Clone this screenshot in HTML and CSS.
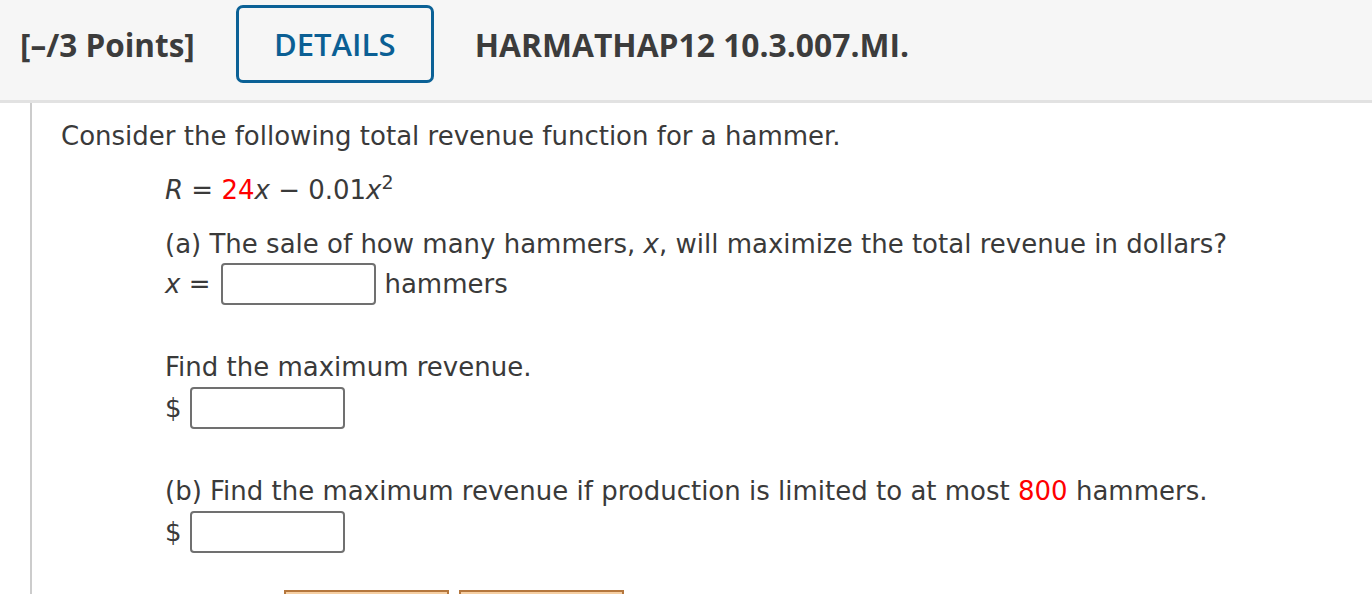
FILE: index.html
```html
<!DOCTYPE html>
<html>
<head>
<meta charset="utf-8">
<link rel="stylesheet" href="styles.css">
</head>
<body>
<div class="header">
  <span class="points">[–/3 Points]</span>
  <span class="details">DETAILS</span>
  <span class="qid">HARMATHAP12 10.3.007.MI.</span>
</div>
<div class="content">
  <p class="intro">Consider the following total revenue function for a hammer.</p>
  <div class="block">
    <p class="eq"><i>R</i> = <span class="red">24</span><i>x</i> − 0.01<i>x</i><sup>2</sup></p>
    <p class="q">(a) The sale of how many hammers, <i>x</i>, will maximize the total revenue in dollars?</p>
    <div class="row"><i>x</i>&nbsp;= <span class="box box-x"></span> hammers</div>
    <p class="q q2">Find the maximum revenue.</p>
    <div class="row">$ <span class="box"></span></div>
    <p class="q q2">(b) Find the maximum revenue if production is limited to at most <span class="red">800</span> hammers.</p>
    <div class="row">$ <span class="box"></span></div>
    <div class="buttons"><span class="btn"></span><span class="btn"></span></div>
  </div>
</div>
</body>
</html>
```
FILE: styles.css
```css
html, body { margin: 0; padding: 0; background: #fff; }
body { width: 1372px; height: 594px; overflow: hidden; }
.header {
  height: 88px;
  padding-bottom: 12px;
  background: #f6f6f6;
  border-bottom: 3px solid #e2e2e2;
  display: flex;
  align-items: center;
  font-family: "Open Sans", sans-serif;
  color: #3c3c3c;
}
.points { margin-left: 20px; font-weight: 700; font-size: 31.5px; }
.details {
  margin-left: 41px;
  width: 192px; height: 72px;
  border: 3px solid #0b6196;
  border-radius: 7px;
  display: flex; align-items: center; justify-content: center;
  color: #0b5f94; font-weight: 600; font-size: 31px;
}
.qid { margin-left: 41px; font-weight: 700; font-size: 31.8px; }
.content {
  margin-left: 30px;
  border-left: 2px solid #cccccc;
  height: 491px;
  overflow: hidden;
  padding-left: 29px;
  font-family: "DejaVu Sans", Verdana, sans-serif;
  font-size: 26px;
  line-height: 30px;
  color: #3a3a3a;
}
p { margin: 0; }
.intro { padding-top: 18px; }
.block { padding-left: 104px; }
.eq { margin-top: 24px; }
.eq sup { font-size: 19px; line-height: 0; }
.red { color: #ff0000; }
.q { margin-top: 24px; }
.row { display: flex; align-items: center; margin-top: 4px; height: 42px; }
.box {
  display: inline-block;
  box-sizing: border-box;
  width: 155px; height: 42px;
  border: 2px solid #707070;
  border-radius: 4px;
  margin: 0 8px 0 8px;
  background: #fff;
}
.box-x { margin-left: 11px; }
.q2 { margin-top: 47px; }
.q2 + .row { margin-top: 5px; }
.buttons { margin-top: 37px; margin-left: 119px; display: flex; gap: 10px; }
.btn {
  width: 161px; height: 30px;
  border: 2px solid #b5773d;
  background: #fde4c6;
  box-shadow: inset 0 0 0 2px #f6cfa3;
}
```
